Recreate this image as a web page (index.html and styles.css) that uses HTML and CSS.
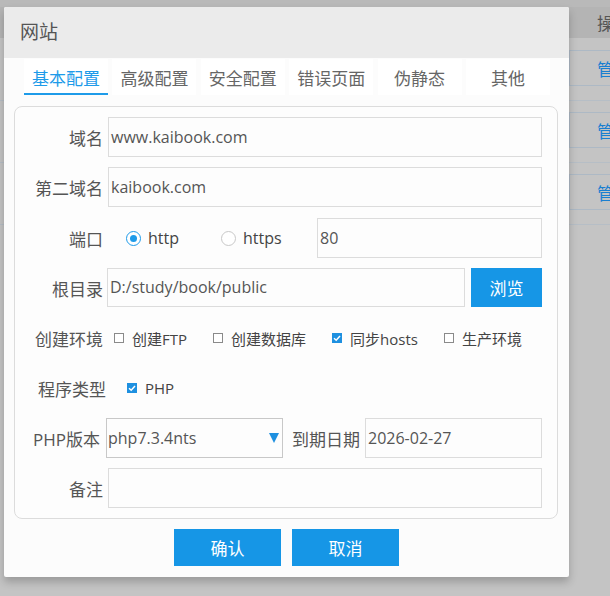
FILE: index.html
```html
<!DOCTYPE html>
<html lang="zh">
<head>
<meta charset="utf-8">
<title>网站</title>
<link rel="stylesheet" href="styles.css">
</head>
<body>
<div class="page">
  <div class="thead"><span class="th-spacer"></span><span class="th">操作</span></div>
  <div class="trow"><span class="td-spacer"></span><div class="cell"><span class="link">管理</span></div></div>
  <div class="trow"><span class="td-spacer"></span><div class="cell"><span class="link">管理</span></div></div>
  <div class="trow"><span class="td-spacer"></span><div class="cell"><span class="link">管理</span></div></div>
</div>

<div class="dialog">
  <div class="dlg-head">网站</div>
  <div class="tabs">
    <span class="tab active">基本配置</span>
    <span class="tab">高级配置</span>
    <span class="tab">安全配置</span>
    <span class="tab">错误页面</span>
    <span class="tab">伪静态</span>
    <span class="tab">其他</span>
  </div>
  <div class="form">
    <div class="row">
      <label class="lbl">域名</label>
      <div class="input">www.kaibook.com</div>
    </div>
    <div class="row">
      <label class="lbl">第二域名</label>
      <div class="input">kaibook.com</div>
    </div>
    <div class="row">
      <label class="lbl">端口</label>
      <div class="radios">
        <span class="radio-item"><span class="radio on"></span>http</span>
        <span class="radio-item"><span class="radio"></span>https</span>
      </div>
      <div class="input port">80</div>
    </div>
    <div class="row">
      <label class="lbl">根目录</label>
      <div class="input root">D:/study/book/public</div>
      <span class="btn browse">浏览</span>
    </div>
    <div class="row">
      <label class="lbl">创建环境</label>
      <div class="checks">
        <span class="check-item"><span class="cb"></span>创建FTP</span>
        <span class="check-item"><span class="cb"></span>创建数据库</span>
        <span class="check-item"><span class="cb on"><svg viewBox="0 0 10 10" width="10" height="10"><path d="M2 5.2 L4.2 7.2 L8 3" fill="none" stroke="#fff" stroke-width="1.5"/></svg></span>同步hosts</span>
        <span class="check-item"><span class="cb"></span>生产环境</span>
      </div>
    </div>
    <div class="row">
      <label class="lbl lbl-wide">程序类型</label>
      <div class="checks php">
        <span class="check-item"><span class="cb on"><svg viewBox="0 0 10 10" width="10" height="10"><path d="M2 5.2 L4.2 7.2 L8 3" fill="none" stroke="#fff" stroke-width="1.5"/></svg></span>PHP</span>
      </div>
    </div>
    <div class="row">
      <label class="lbl lbl-php">PHP版本</label>
      <div class="select">php7.3.4nts<svg class="arrow" viewBox="0 0 10 10" width="10" height="10"><polygon points="0,0 10,0 5,10" fill="#1e90e0"/></svg></div>
      <label class="lbl-inline">到期日期</label>
      <div class="input date">2026-02-27</div>
    </div>
    <div class="row">
      <label class="lbl">备注</label>
      <div class="input"></div>
    </div>
  </div>
  <div class="actions">
    <span class="btn action">确认</span>
    <span class="btn action">取消</span>
  </div>
</div>
</body>
</html>
```
FILE: styles.css
```css
* { box-sizing: border-box; }
html, body { margin: 0; padding: 0; }
body {
  width: 610px;
  height: 596px;
  overflow: hidden;
  background: #c4c4c4;
  font-family: "Open Sans", "Noto Sans CJK SC", sans-serif;
  color: #555;
  position: relative;
}
.page {
  padding-top: 7px;
  background: linear-gradient(#b9b9b9, #b9b9b9) top / 100% 7px no-repeat;
}
.thead {
  height: 31px;
  background: #b4b4b4;
  display: grid;
  grid-template-columns: 597px 1fr;
  align-items: center;
}
.th { font-size: 17px; color: #555; white-space: nowrap; }
.trow {
  display: grid;
  grid-template-columns: 569px 1fr;
  padding: 11px 0 14px;
  border-bottom: 1px solid #b6bec6;
}
.thead + .trow { padding-top: 12px; }
.cell {
  height: 36px;
  border: 1px solid #adb9c5;
  border-right: 0;
  display: flex;
  align-items: center;
  padding-left: 27px;
}
.link { font-size: 17px; color: #1a7fd0; white-space: nowrap; }

.dialog {
  position: absolute;
  left: 4px;
  top: 7px;
  width: 565px;
  height: 570px;
  background: #fcfcfc;
  border-radius: 2px;
  box-shadow: 0 5px 8px rgba(0,0,0,0.22);
  overflow: hidden;
}
.dlg-head {
  height: 51px;
  background: #ebebeb;
  font-size: 19px;
  line-height: 51px;
  padding-left: 16px;
  color: #555;
}
.tabs {
  display: flex;
  gap: 4.4px;
  padding: 1px 0 0 20px;
  height: 37px;
}
.tab {
  width: 84px;
  height: 36px;
  background: #fff;
  display: flex;
  align-items: center;
  justify-content: center;
  font-size: 17px;
  color: #666;
}
.tab.active {
  color: #1e9be9;
  border-bottom: 2px solid #1e9be9;
  padding-top: 2px;
}
.form {
  margin: 11px 11px 0 10px;
  border: 1px solid #dcdcdc;
  border-radius: 8px;
  background: #fdfdfd;
  padding: 10px 15px 10px 0;
  display: flex;
  flex-direction: column;
  gap: 10px;
}
.row {
  display: flex;
  align-items: center;
  height: 40px;
}
.row:nth-child(3) { margin-top: 1px; }
.lbl {
  width: 88px;
  flex: none;
  text-align: right;
  font-size: 17px;
  color: #555;
  margin-right: 5px;
}
.lbl-wide { width: 91px; }
.lbl-php { width: 85px; margin-right: 6px; }
.input {
  flex: 1;
  height: 40px;
  border: 1px solid #dcdcdc;
  background: #fdfdfd;
  font-size: 16px;
  line-height: 38px;
  padding-left: 2px;
  color: #555;
  white-space: nowrap;
}
.radios {
  display: flex;
  margin-left: 18px;
  width: 191px;
  flex: none;
}
.radio-item {
  display: flex;
  align-items: center;
  font-size: 16px;
  color: #444;
  width: 95px;
}
.radio {
  width: 15px;
  height: 15px;
  border-radius: 50%;
  border: 1px solid #c8c8c8;
  background: #fff;
  margin-right: 7px;
  display: flex;
  align-items: center;
  justify-content: center;
}
.radio.on { border-color: #1e9be9; }
.radio.on::after {
  content: "";
  width: 7px;
  height: 7px;
  border-radius: 50%;
  background: #1e9be9;
}
.port { flex: none; width: 225px; }
.root { flex: none; width: 358px; margin-left: -1px; height: 39px; line-height: 37px; align-self: flex-start; }
.btn {
  display: flex;
  align-items: center;
  justify-content: center;
  background: #1696e6;
  color: #fff;
  font-size: 17px;
}
.browse { width: 71px; height: 39px; margin-left: 6px; align-self: flex-start; }
.checks {
  display: flex;
  margin-left: 6px;
}
.checks.php { margin-left: 16px; }
.check-item {
  display: flex;
  align-items: center;
  font-size: 15px;
  color: #444;
  margin-right: 26px;
  white-space: nowrap;
}
.cb {
  width: 10px;
  height: 10px;
  border: 1px solid #8a8a8a;
  background: #fff;
  margin-right: 8px;
  display: flex;
}
.cb.on { border: 0; background: #1e90e0; }
.select {
  flex: none;
  width: 177px;
  height: 40px;
  border: 1px solid #c8c8c8;
  background: #fdfdfd;
  font-size: 16px;
  line-height: 38px;
  padding-left: 1px;
  color: #555;
  display: flex;
  align-items: center;
  justify-content: space-between;
  padding-right: 3px;
}
.arrow { width: 10px; height: 10px; }
.lbl-inline {
  font-size: 17px;
  color: #555;
  margin: 0 5px 0 9px;
  white-space: nowrap;
}
.date { flex: 1; }
.actions {
  display: flex;
  justify-content: center;
  gap: 11px;
  margin-top: 10px;
}
.action { width: 107px; height: 37px; }
```
